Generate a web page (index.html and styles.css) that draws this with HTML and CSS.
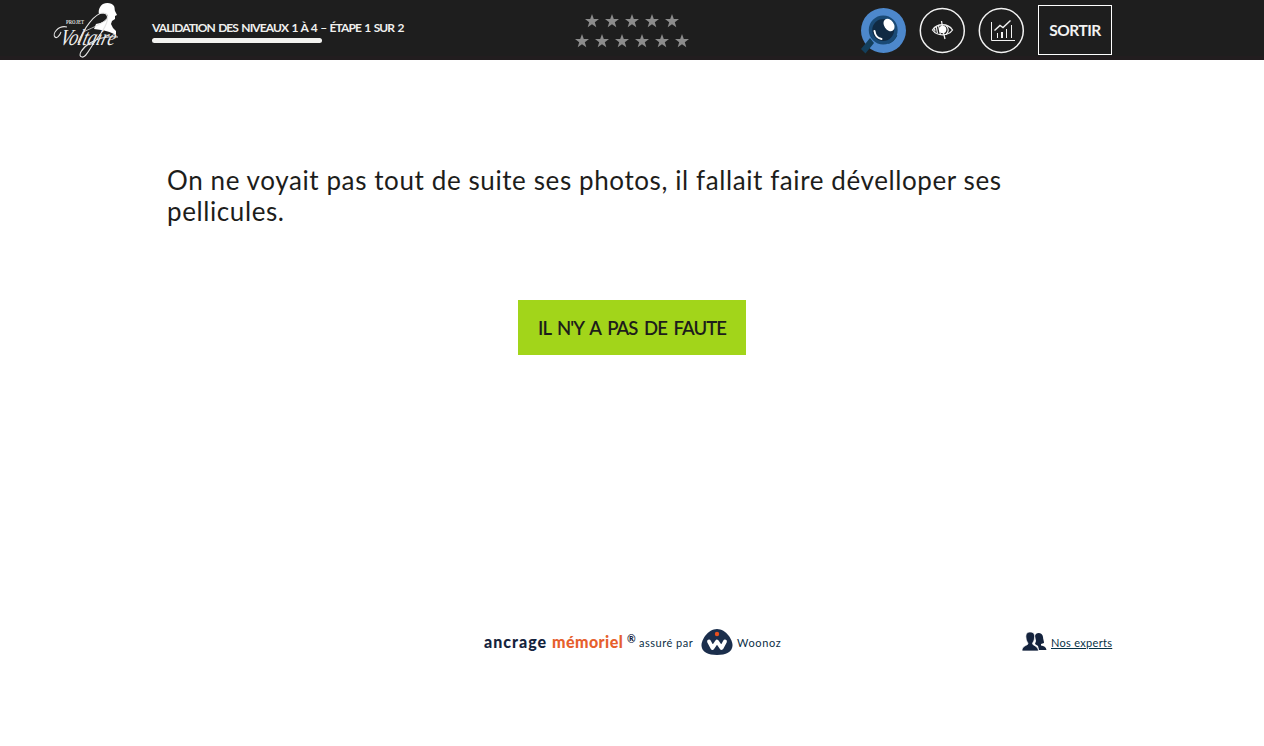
FILE: index.html
```html
<!DOCTYPE html>
<html lang="fr">
<head>
<meta charset="utf-8">
<title>Projet Voltaire</title>
<link rel="stylesheet" href="styles.css">
</head>
<body>
<svg class="defs" aria-hidden="true">
  <symbol id="star" viewBox="0 0 14 14"><path d="M7 0 8.800 5H14L9.800 8.200 11.300 13.300 7 10.300 2.700 13.300 4.200 8.200 0 5H5.200Z"/></symbol>
</svg>
<header class="topbar">
  <svg class="logo" viewBox="0 0 70 60" aria-label="Projet Voltaire">
    <path class="bust" d="M45 14C44 10 46 6 49 4C53 2 58 3 60 6C61 8 60.500 10 61 11L63 15L61 16L61 19L58 21L57 24L59 28L62 31L62 35C57 32 50 30 40 29L42 24C48 23 54 20 54 16C53 13 49 12 45 14Z"/>
    <text class="logo-small" x="12" y="24" textLength="18" lengthAdjust="spacingAndGlyphs">PROJET</text>
    <text class="logo-script" transform="translate(5 45) skewX(-16)" x="0" y="0" textLength="55" lengthAdjust="spacingAndGlyphs">Voltaire</text>
    <path class="swash" d="M13 27C4 25-2 34 1 37C3 39 6 35 7 32M24 43C30 28 41 13 49 13C59 14 51 29 42 40C34 51 32 58 28 57C23 56 28 48 36 43C44 38 55 36 64 37"/>
    <path class="cut" d="M29 32C40 27 53 22 54 16"/>
  </svg>
  <div class="progress">
    <div class="progress-label">VALIDATION DES NIVEAUX 1 À 4 – ÉTAPE 1 SUR 2</div>
    <div class="progress-bar"></div>
  </div>
  <div class="stars">
    <div class="star-row"><svg><use href="#star"/></svg><svg><use href="#star"/></svg><svg><use href="#star"/></svg><svg><use href="#star"/></svg><svg><use href="#star"/></svg></div>
    <div class="star-row"><svg><use href="#star"/></svg><svg><use href="#star"/></svg><svg><use href="#star"/></svg><svg><use href="#star"/></svg><svg><use href="#star"/></svg><svg><use href="#star"/></svg></div>
  </div>
  <nav class="actions">
    <svg class="round" viewBox="0 0 46 46">
      <circle cx="23.500" cy="22.500" r="22.500" fill="#4d88cc"/>
      <path d="M10 30 14 35 5.500 45.500 1 41Z" fill="#143f5c"/>
      <path d="M28 34.500A14 14 0 0 0 36 27" fill="none" stroke="#143f5c" stroke-width="3"/>
      <circle cx="23.200" cy="22" r="12.700" fill="#102a43" stroke="#1a4a75" stroke-width="3.500"/>
      <ellipse cx="29" cy="17" rx="4.800" ry="6.800" transform="rotate(-35 29 17)" fill="#fff"/>
      <path d="M14.500 23C15 27 17 30 21.500 31" fill="none" stroke="#fff" stroke-width="2" stroke-linecap="round"/>
    </svg>
    <svg class="round" viewBox="0 0 46 46" fill="none" stroke="#f2f2f2">
      <circle cx="23.300" cy="22.500" r="22" stroke-width="1.500"/>
      <path d="M13.500 22C18 15 29 15 33.500 22C29 28.500 18 28.500 13.500 22Z" stroke-width="1.300"/>
      <path d="M22.500 13 23.500 19M24.500 25 26 31" stroke-width="1.300"/>
      <path d="M15.500 20.500 16 23.500M17.300 18.500 18.500 25.500M19.500 17.500 21.500 27" stroke-width="1.200"/>
      <circle cx="23.700" cy="21.500" r="3.700" fill="#fff" stroke="none"/>
      <path d="M27 17.500C30 20 30 24 27 26.500" stroke-width="1.200"/>
    </svg>
    <svg class="round" viewBox="0 0 46 46" fill="none" stroke="#f2f2f2">
      <circle cx="23.300" cy="22.500" r="22" stroke-width="1.500"/>
      <path d="M13.500 14V32.500H37" stroke-width="1"/>
      <path d="M16.500 22.500 22 17.500 25 19.500 32.500 12.500" stroke-width="1.400"/>
      <path d="M19.500 25V30M28.500 21V30M33.500 17V30" stroke-width="1"/>
      <path d="M24 24V30" stroke-width="2"/>
    </svg>
    <a class="exit">SORTIR</a>
  </nav>
</header>
<main class="exercise">
  <p class="sentence"><span>On ne voyait pas tout de suite ses photos, il fallait faire dévelloper ses</span> <span>pellicules.</span></p>
  <button class="no-mistake">IL N'Y A PAS DE FAUTE</button>
</main>
<footer class="footer">
  <div class="brand">
    <b class="anchor">ancrage</b><b class="memory">mémoriel</b><span class="reg">®</span><span class="by">assuré par</span>
    <svg class="woonoz" viewBox="0 0 32 26">
      <path d="M16 0C25 0 32 11 31.500 17C31 23 25 26 16 26S1 23 .5 17C0 11 7 0 16 0Z" fill="#1b2e4c"/>
      <path d="M8 12.500 11.500 19 16 12.500 20.500 19 24 12.500" fill="none" stroke="#fff" stroke-width="3.800" stroke-linejoin="round" stroke-linecap="round"/>
      <circle cx="16" cy="5" r="2.200" fill="#e9501e"/>
    </svg>
    <span class="company">Woonoz</span>
  </div>
  <a class="experts">
    <svg viewBox="0 0 25 20" fill="#14233d">
      <path d="M13 4C13.500 0 20.500 0 21 5C21 7 22 9 22 11L19 12V13.500C22 14 24 15 24.500 18H17L16 14 13 12 14 9Z"/>
      <path d="M8 0C11.500 0 13 2 12.500 6C12.500 9 10.500 10 10.500 12C12 14 16 14 16.500 19H0C0 14 4 14 6 12C6 10 4 9 4 6C3.500 2 5 0 8 0Z" stroke="#fff" stroke-width=".7"/>
    </svg>
    <span class="experts-label">Nos experts</span>
  </a>
</footer>
</body>
</html>
```
FILE: styles.css
```css
* { box-sizing: border-box; }
body { margin: 0; min-height: 746px; background: #fff; color: #1d1d1b; font-family: Lato, "Open Sans", sans-serif; }
.defs { display: none; }
.topbar { display: grid; grid-template-columns: 98px 423px 114px 1fr; height: 60px; padding: 0 152px 0 54px; background: #1e1e1e; border-bottom: 4px solid #221d1f; }
.logo { width: 70px; height: 60px; overflow: visible; }
.bust { fill: #fff; }
.cut { fill: none; stroke: #ddd; stroke-width: .8; }
.logo-small { fill: #ddd; font: bold 6.5px "Liberation Serif", serif; }
.logo-script { fill: #eee; font: italic 23px "Liberation Serif", serif; }
.swash { fill: none; stroke: #e5e5e5; stroke-width: 1.1; }
.progress { padding-top: 20px; }
.progress-label { height: 18px; font-size: 12px; line-height: 16px; font-weight: 700; letter-spacing: -0.9px; word-spacing: 1.3px; color: #f0f0ee; white-space: nowrap; }
.progress-bar { width: 170px; height: 5px; border-radius: 3px; background: #f2f2f0; }
.stars { display: grid; gap: 6px; padding-top: 14px; align-content: start; }
.star-row { display: flex; justify-content: center; gap: 6px; height: 14px; }
.star-row svg { width: 14px; height: 14px; fill: #8c8c8c; }
.actions { display: flex; justify-content: flex-end; gap: 13px; padding-top: 5px; height: 55px; }
.round { width: 46px; height: 46px; margin-top: 3px; overflow: visible; }
.exit { width: 74px; height: 50px; margin-left: 1px; border: 1px solid #fff; color: #f2f2f2; font-size: 15.5px; line-height: 48px; font-weight: 700; letter-spacing: -0.5px; text-align: center; }
.exercise { display: flex; flex-direction: column; align-items: center; height: 560px; padding: 105px 152px 0; }
.sentence { width: 930px; height: 62px; margin: 0; font-size: 26px; line-height: 31px; letter-spacing: 0.6px; white-space: nowrap; }
.sentence span { display: block; }
.no-mistake { width: 228px; height: 55px; margin-top: 73px; padding: 0; border: 0; background: #a2d51a; color: #1d1d1b; font: 600 18.5px Lato, sans-serif; letter-spacing: -0.95px; word-spacing: 3px; white-space: nowrap; }
.footer { display: grid; grid-template-columns: 1fr auto; height: 46px; padding: 9px 152px 0 484px; }
.brand { display: flex; height: 26px; color: #14233d; white-space: nowrap; line-height: 25px; }
.brand b { font-size: 16px; font-weight: 900; }
.anchor { width: 68px; letter-spacing: 1px; }
.brand .memory { width: 75px; color: #e6602d; letter-spacing: 0.45px; }
.reg { width: 12px; font-size: 10.5px; line-height: 20px; font-weight: 700; }
.by { width: 62px; font-size: 11px; line-height: 28px; letter-spacing: 0.5px; color: #0b2e45; }
.woonoz { width: 32px; height: 26px; }
.company { margin-left: 4px; font-size: 11px; line-height: 28px; color: #0b2e45; letter-spacing: 0.65px; }
.experts { display: flex; gap: 4px; padding-top: 3px; height: 26px; color: #073247; }
.experts svg { width: 25px; height: 20px; }
.experts-label { font-size: 11px; line-height: 22px; text-decoration: underline; width: 61px; white-space: nowrap; letter-spacing: 0.3px; }
```
